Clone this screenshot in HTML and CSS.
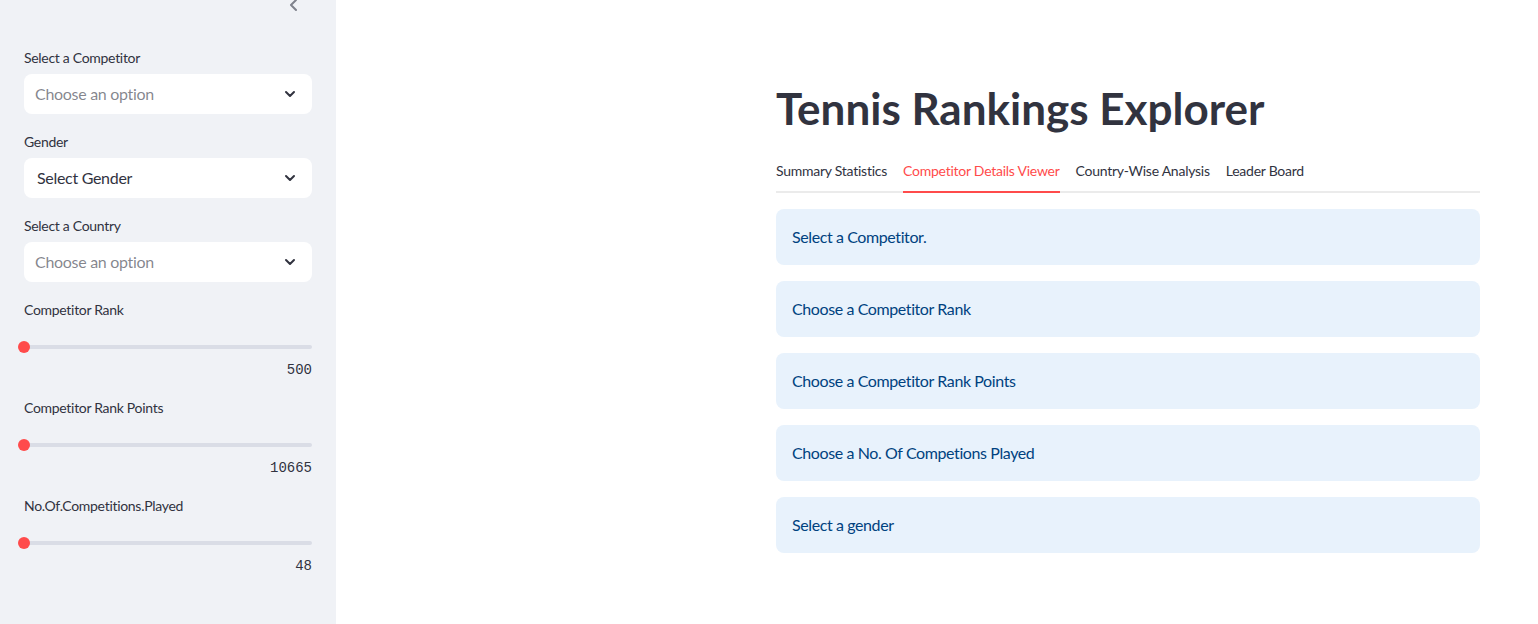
FILE: index.html
```html
<!DOCTYPE html>
<html>
<head>
<meta charset="utf-8">
<link rel="stylesheet" href="styles.css">
</head>
<body>
<div class="app">
  <aside class="sidebar">
    <div class="collapse">
      <svg width="12" height="14" viewBox="0 0 12 14"><path d="M8 1 L3 6 L8 11" fill="none" stroke="#7f828c" stroke-width="2" stroke-linecap="round" stroke-linejoin="round"/></svg>
    </div>
    <div class="widgets">
      <div class="widget">
        <label class="lbl">Select a Competitor</label>
        <div class="select"><span class="ph">Choose an option</span><svg class="chev" width="12" height="8" viewBox="0 0 12 8"><path d="M2 2 L6 6 L10 2" fill="none" stroke="#31333f" stroke-width="2" stroke-linecap="round" stroke-linejoin="round"/></svg></div>
      </div>
      <div class="widget">
        <label class="lbl">Gender</label>
        <div class="select"><span class="val">Select Gender</span><svg class="chev" width="12" height="8" viewBox="0 0 12 8"><path d="M2 2 L6 6 L10 2" fill="none" stroke="#31333f" stroke-width="2" stroke-linecap="round" stroke-linejoin="round"/></svg></div>
      </div>
      <div class="widget">
        <label class="lbl">Select a Country</label>
        <div class="select"><span class="ph">Choose an option</span><svg class="chev" width="12" height="8" viewBox="0 0 12 8"><path d="M2 2 L6 6 L10 2" fill="none" stroke="#31333f" stroke-width="2" stroke-linecap="round" stroke-linejoin="round"/></svg></div>
      </div>
      <div class="widget slider-w">
        <label class="lbl">Competitor Rank</label>
        <div class="track"><span class="thumb"></span></div>
        <div class="sval">500</div>
      </div>
      <div class="widget slider-w">
        <label class="lbl">Competitor Rank Points</label>
        <div class="track"><span class="thumb"></span></div>
        <div class="sval">10665</div>
      </div>
      <div class="widget slider-w">
        <label class="lbl">No.Of.Competitions.Played</label>
        <div class="track"><span class="thumb"></span></div>
        <div class="sval">48</div>
      </div>
    </div>
  </aside>
  <main class="main">
    <div class="content">
      <h1 class="title">Tennis Rankings Explorer</h1>
      <div class="tabs">
        <div class="tab">Summary Statistics</div>
        <div class="tab active">Competitor Details Viewer</div>
        <div class="tab">Country-Wise Analysis</div>
        <div class="tab">Leader Board</div>
      </div>
      <div class="infos">
        <div class="info">Select a Competitor.</div>
        <div class="info">Choose a Competitor Rank</div>
        <div class="info">Choose a Competitor Rank Points</div>
        <div class="info">Choose a No. Of Competions Played</div>
        <div class="info">Select a gender</div>
      </div>
    </div>
  </main>
</div>
</body>
</html>
```
FILE: styles.css
```css
* { box-sizing: border-box; }
html, body { margin: 0; padding: 0; }
body {
  font-family: "Source Sans Pro", "Lato", "Noto Sans", sans-serif;
  color: #31333f;
  background: #fff;
  overflow: hidden;
}
.app { display: flex; height: 624px; }
.sidebar {
  width: 336px;
  flex: none;
  background: #f0f2f6;
  padding: 0 24px;
  position: relative;
}
.collapse {
  position: absolute;
  top: 0;
  left: 288px;
  height: 12px;
  overflow: hidden;
}
.collapse svg { display: block; margin-top: -1px; }
.widgets { padding-top: 48px; display: flex; flex-direction: column; gap: 18px; }
.widget { display: flex; flex-direction: column; }
.lbl {
  font-size: 14px;
  line-height: 20px;
  height: 20px;
  margin-bottom: 6px;
  color: #31333f;
  letter-spacing: -0.3px;
}
.select {
  height: 40px;
  background: #fff;
  border-radius: 8px;
  display: flex;
  align-items: center;
  justify-content: space-between;
  padding: 0 16px 2px 11px;
  font-size: 16px;
  letter-spacing: -0.3px;
}
.select .val { padding-left: 2px; color: #31333f; }
.ph { color: rgba(49, 51, 63, 0.6); }
.chev { display: block; margin-top: 2px; }
.slider-w .lbl { margin-bottom: 0; }
.track {
  position: relative;
  height: 4px;
  margin-top: 25px;
  background: #dadde6;
  border-radius: 4px;
}
.thumb {
  position: absolute;
  left: -6px;
  top: -4px;
  width: 12px;
  height: 12px;
  border-radius: 50%;
  background: #ff4b4b;
}
.sval {
  margin-top: 11px;
  text-align: right;
  font-family: "Liberation Mono", "DejaVu Sans Mono", monospace;
  font-size: 14px;
  line-height: 20px;
  color: #31333f;
}
.main { flex: 1; }
.content { margin-left: 440px; width: 704px; padding-top: 80px; }
.title {
  margin: 0;
  font-size: 44px;
  font-weight: 700;
  line-height: 56px;
  color: #31333f;
}
.tabs {
  margin-top: 17px;
  display: flex;
  gap: 16px;
  border-bottom: 2px solid #ebebeb;
  height: 40px;
}
.tab {
  font-size: 14px;
  line-height: 20px;
  padding-top: 8px;
  height: 40px;
  margin-bottom: -2px;
  color: #31333f;
  letter-spacing: -0.25px;
  border-bottom: 2px solid transparent;
}
.tab.active { color: #ff4b4b; border-bottom-color: #ff4b4b; }
.infos { margin-top: 16px; display: flex; flex-direction: column; gap: 16px; }
.info {
  height: 56px;
  border-radius: 8px;
  background: #e8f2fc;
  color: #004280;
  font-size: 16px;
  line-height: 24px;
  padding: 16px;
  letter-spacing: -0.4px;
}
```
